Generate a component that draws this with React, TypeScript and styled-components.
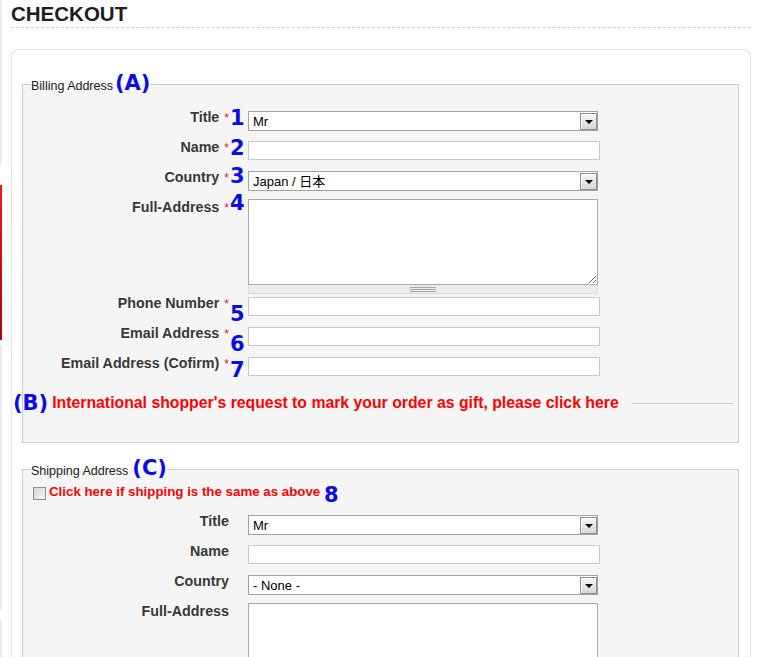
import styled, { createGlobalStyle } from "styled-components";

const GlobalStyle = createGlobalStyle`
  html, body {
    margin: 0;
    padding: 0;
    background: #fff;
  }
  body {
    font-family: "Liberation Sans", Arial, "Noto Sans CJK JP", sans-serif;
    color: #333;
  }
`;

type FieldKind = "select" | "input" | "textarea";

interface FieldDef {
  label: string;
  kind: FieldKind;
  value?: string;
  options?: string[];
  required?: boolean;
  mark?: string;
  markY?: number;
}

const titles = ["Mr", "Mrs", "Ms"];
const countries = ["- None -", "Japan / 日本", "United States", "United Kingdom"];

const billing: FieldDef[] = [
  { label: "Title", kind: "select", value: "Mr", options: titles, required: true, mark: "1", markY: -3 },
  { label: "Name", kind: "input", required: true, mark: "2", markY: -3 },
  { label: "Country", kind: "select", value: "Japan / 日本", options: countries, required: true, mark: "3", markY: -5 },
  { label: "Full-Address", kind: "textarea", required: true, mark: "4", markY: -6 },
  { label: "Phone Number", kind: "input", required: true, mark: "5", markY: 7 },
  { label: "Email Address", kind: "input", required: true, mark: "6", markY: 7 },
  { label: "Email Address (Cofirm)", kind: "input", required: true, mark: "7", markY: 3 },
];

const shipping: FieldDef[] = [
  { label: "Title", kind: "select", value: "Mr", options: titles },
  { label: "Name", kind: "input" },
  { label: "Country", kind: "select", value: "- None -", options: countries },
  { label: "Full-Address", kind: "textarea" },
  { label: "Phone Number", kind: "input" },
];

const edge = [
  { h: 165, c: "#ececec" },
  { h: 20, c: "#fff" },
  { h: 155, c: "linear-gradient(#f21616, #a80808)" },
  { h: 5, c: "#fff" },
  { h: 265, c: "#ececec" },
  { h: 10, c: "#fff" },
  { h: 80, c: "#ececec" },
];

const App = () => {
  return (
    <>
      <GlobalStyle />
      <Page>
        <SideEdge>
          {edge.map((e, i) => (
            <EdgePiece key={i} $h={e.h} $c={e.c} />
          ))}
        </SideEdge>
        <Main>
          <Heading>CHECKOUT</Heading>
          <Card>
            <Fieldset $pt={8}>
              <Legend>
                Billing Address<Mark>(A)</Mark>
              </Legend>
              {billing.map((f) => (
                <FormRow key={f.label} f={f} />
              ))}
              <GiftRow>
                <Mark>(B)</Mark>
                <GiftText>
                  International shopper's request to mark your order as gift, please click here
                </GiftText>
                <GiftLine />
              </GiftRow>
            </Fieldset>

            <Fieldset $pt={0} $mt={13}>
              <Legend>
                Shipping Address<Mark $gap={4}>(C)</Mark>
              </Legend>
              <CheckRow>
                <Check type="checkbox" />
                <CheckText>
                  Click here if shipping is the same as above <InlineMark>8</InlineMark>
                </CheckText>
              </CheckRow>
              {shipping.map((f) => (
                <FormRow key={f.label} f={f} />
              ))}
            </Fieldset>
          </Card>
        </Main>
      </Page>
    </>
  );
};

const FormRow = ({ f }: { f: FieldDef }) => {
  const tall = f.kind === "textarea";
  return (
    <Row $tall={tall}>
      <Label $tall={tall}>
        {f.label}
        {f.required ? <Star>*</Star> : ""}
      </Label>
      <NumCell>{f.mark ? <Num $y={f.markY || 0}>{f.mark}</Num> : null}</NumCell>
      <Field f={f} />
    </Row>
  );
};

const Field = ({ f }: { f: FieldDef }) => {
  if (f.kind === "select") {
    return (
      <SelectWrap>
        <Select defaultValue={f.value}>
          {(f.options || []).map((o) => (
            <option key={o}>{o}</option>
          ))}
        </Select>
        <ArrowBtn />
      </SelectWrap>
    );
  }
  if (f.kind === "textarea") {
    return (
      <AreaWrap>
        <Area />
        <Grippie />
      </AreaWrap>
    );
  }
  return <Input type="text" />;
};

export default App;

const Page = styled.div`
  display: flex;
  align-items: stretch;
  min-height: 700px;
`;

const SideEdge = styled.div`
  width: 2px;
  flex-shrink: 0;
  display: flex;
  flex-direction: column;
`;

const EdgePiece = styled.div<{ $h: number; $c: string }>`
  height: ${({ $h }) => $h}px;
  background: ${({ $c }) => $c};
`;

const Main = styled.div`
  margin-left: 9px;
  width: 740px;
`;

const Heading = styled.h1`
  margin: 2px 0 0;
  padding: 0 0 1px;
  font-size: 20.5px;
  line-height: 24px;
  font-weight: bold;
  color: #1e1e1e;
  border-bottom: 1px dashed #cfcfcf;
`;

const Card = styled.div`
  margin-top: 21px;
  border: 1px solid #e3e3e3;
  border-bottom: none;
  border-radius: 8px 8px 0 0;
  padding: 21px 11px 40px 10px;
`;

const Fieldset = styled.fieldset<{ $pt: number; $mt?: number }>`
  margin: ${({ $mt }) => $mt || 0}px 0 0;
  padding: ${({ $pt }) => $pt}px 10px 0;
  border: 1px solid #cccccc;
  background: #f5f5f5;
  min-width: 0;
`;

const Legend = styled.legend`
  padding: 0;
  margin-left: -2px;
  font-size: 12.5px;
  line-height: 24px;
  color: #222;
`;

const Mark = styled.span<{ $gap?: number }>`
  margin-left: ${({ $gap }) => $gap || 2}px;
  font-family: "DejaVu Sans", Verdana, sans-serif;
  font-weight: bold;
  font-size: 21px;
  line-height: 24px;
  color: #0c0ce8;
`;

const Row = styled.div<{ $tall?: boolean }>`
  display: grid;
  grid-template-columns: 196px 19px auto;
  grid-auto-rows: minmax(20px, auto);
  align-items: start;
  padding: ${({ $tall }) => ($tall ? "3px 0 0" : "5px 0")};
`;

const Label = styled.div<{ $tall?: boolean }>`
  margin-top: ${({ $tall }) => ($tall ? 1 : -1)}px;
  text-align: right;
  font-size: 14.3px;
  line-height: 14px;
  font-weight: bold;
  color: #383838;
  white-space: nowrap;
`;

const Star = styled.span`
  margin-left: 5px;
  font-size: 12px;
  font-weight: normal;
  color: #e02020;
`;

const NumCell = styled.div`
  height: 14px;
`;

const Num = styled.div<{ $y: number }>`
  margin-top: ${({ $y }) => $y}px;
  padding-left: 1px;
  font-family: "DejaVu Sans", Verdana, sans-serif;
  font-weight: bold;
  font-size: 21px;
  line-height: 21px;
  color: #0c0ce8;
`;

const SelectWrap = styled.div`
  position: relative;
  width: 350px;
  height: 20px;
`;

const Select = styled.select`
  appearance: none;
  display: block;
  width: 100%;
  height: 20px;
  margin: 0;
  padding: 0 22px 0 4px;
  border: 1px solid #a3a3a3;
  border-radius: 0;
  background: #fff;
  font-family: "Liberation Sans", Arial, "Noto Sans CJK JP", sans-serif;
  font-size: 13px;
  color: #000;
  outline: none;
`;

const ArrowBtn = styled.span`
  position: absolute;
  top: 2px;
  right: 1px;
  width: 17px;
  height: 17px;
  box-sizing: border-box;
  border: 1px solid #8c8c8c;
  box-shadow: inset 1px 1px 0 #fff;
  background: linear-gradient(#f7f7f7, #d6d6d6);
  display: flex;
  align-items: center;
  justify-content: center;
  pointer-events: none;

  &::after {
    content: "";
    margin-top: 1px;
    border-left: 4px solid transparent;
    border-right: 4px solid transparent;
    border-top: 4px solid #000;
  }
`;

const Input = styled.input`
  display: block;
  box-sizing: border-box;
  width: 352px;
  height: 19px;
  margin: 0;
  padding: 0 4px;
  border: 1px solid #c8c8c8;
  border-radius: 0;
  background: #fff;
  font-family: "Liberation Sans", Arial, sans-serif;
  font-size: 13px;
  outline: none;
`;

const AreaWrap = styled.div`
  width: 350px;
  margin-bottom: -2px;
`;

const Area = styled.textarea`
  display: block;
  box-sizing: border-box;
  width: 350px;
  height: 86px;
  margin: 0;
  padding: 2px 4px;
  border: 1px solid #a9a9a9;
  border-radius: 0;
  background: #fff;
  resize: vertical;
  font-family: "Liberation Sans", Arial, sans-serif;
  font-size: 13px;
  outline: none;
`;

const Grippie = styled.div`
  box-sizing: border-box;
  height: 9px;
  background: #ececec;
  border: 1px solid #dcdcdc;
  border-top: none;
  display: flex;
  justify-content: center;
  padding-top: 2px;

  &::after {
    content: "";
    width: 26px;
    height: 1px;
    background: #a8a8a8;
    box-shadow: 0 2px 0 #a8a8a8, 0 4px 0 #a8a8a8;
  }
`;

const GiftRow = styled.div`
  display: flex;
  align-items: center;
  height: 24px;
  margin: 9px -5px 27px -20px;

  & > span {
    margin-left: 0;
  }
`;

const GiftText = styled.div`
  margin-left: 4px;
  font-size: 15.8px;
  font-weight: bold;
  line-height: 20px;
  color: #f00;
  white-space: nowrap;
`;

const GiftLine = styled.div`
  flex: 1;
  margin-left: 13px;
  border-top: 1px solid #cccccc;
`;

const CheckRow = styled.div`
  display: flex;
  align-items: center;
  height: 20px;
  margin-bottom: 7px;
`;

const Check = styled.input`
  appearance: none;
  box-sizing: border-box;
  width: 13px;
  height: 13px;
  margin: 0;
  border: 1px solid #8e8e8e;
  border-radius: 0;
  background: linear-gradient(135deg, #d4d4d4, #f6f6f6);
`;

const CheckText = styled.span`
  margin-left: 3px;
  font-size: 13.3px;
  font-weight: bold;
  line-height: 20px;
  color: #f00;
  white-space: nowrap;
`;

const InlineMark = styled.span`
  font-family: "DejaVu Sans", Verdana, sans-serif;
  font-size: 21px;
  color: #0c0ce8;
  vertical-align: -6px;
`;
